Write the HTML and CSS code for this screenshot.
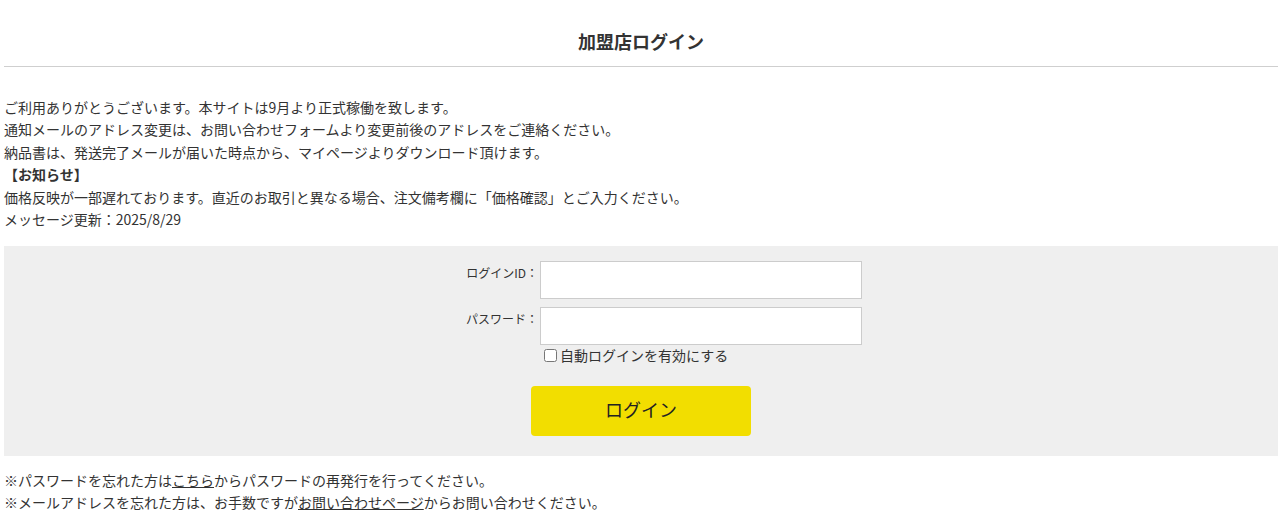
FILE: index.html
```html
<html>
  <head>
    <meta charset="utf-8">
    <title>加盟店ログイン</title>
    <link rel="stylesheet" href="styles.css">
  </head>
  <body>
    <div class="page">
      <h1 class="title">加盟店ログイン</h1>

      <div class="message">
        <p>ご利用ありがとうございます。本サイトは9月より正式稼働を致します。</p>
        <p>通知メールのアドレス変更は、お問い合わせフォームより変更前後のアドレスをご連絡ください。</p>
        <p>納品書は、発送完了メールが届いた時点から、マイページよりダウンロード頂けます。</p>
        <p class="notice">【お知らせ】</p>
        <p>価格反映が一部遅れております。直近のお取引と異なる場合、注文備考欄に「価格確認」とご入力ください。</p>
        <p>メッセージ更新：2025/8/29</p>
      </div>

      <form class="login-box" onsubmit="return false;">
        <div class="fields">
          <label class="label" for="login-id">ログインID：</label>
          <input class="input" type="text" id="login-id">
          <label class="label" for="password">パスワード：</label>
          <input class="input" type="password" id="password">
          <span></span>
          <label class="remember"><input type="checkbox">自動ログインを有効にする</label>
        </div>
        <div class="actions">
          <button class="login-button" type="submit">ログイン</button>
        </div>
      </form>

      <div class="help">
        <p>※パスワードを忘れた方は<a href="#">こちら</a>からパスワードの再発行を行ってください。</p>
        <p>※メールアドレスを忘れた方は、お手数ですが<a href="#">お問い合わせページ</a>からお問い合わせください。</p>
      </div>
    </div>
  </body>
</html>
```

FILE: styles.css
```css
/* General */
body {
  margin: 0;
  font-family: "Noto Sans CJK JP", "Noto Sans", sans-serif;
  font-size: 14px;
  color: #333;
  background-color: #fff;
}

p {
  margin: 0;
}

.page {
  padding: 0 5px 0 4px;
}

/* Header */
.title {
  margin: 0;
  padding: 29px 0 13px;
  font-size: 18px;
  line-height: 24px;
  text-align: center;
  border-bottom: 1px solid #cfcfcf;
}

/* Message */
.message {
  margin-top: 29px;
  line-height: 22.4px;
}

.notice {
  font-weight: bold;
}

/* Login form */
.login-box {
  margin: 16px 0 0;
  padding: 15px 0 20px;
  background-color: #efefef;
}

.fields {
  display: grid;
  grid-template-columns: 118px 322px;
  column-gap: 2px;
  row-gap: 8px;
  justify-content: center;
}

.label {
  font-size: 12px;
  line-height: 18px;
  padding-top: 3px;
  text-align: right;
}

.input {
  height: 38px;
  margin: 0;
  border: 1px solid #ccc;
  background-color: #fff;
  box-sizing: border-box;
}

.remember {
  display: flex;
  align-items: center;
  margin-top: -8px;
  font-size: 14px;
  line-height: 20px;
}

.remember input {
  margin: 0 3px 0 4px;
  width: 13px;
  height: 13px;
}

.actions {
  display: flex;
  justify-content: center;
  margin-top: 21px;
}

.login-button {
  width: 220px;
  height: 50px;
  padding: 0 0 4px;
  border: none;
  border-radius: 4px;
  background-color: #f2de00;
  color: #222;
  font-family: inherit;
  font-size: 18px;
  cursor: pointer;
}

/* Help links */
.help {
  margin-top: 13px;
  line-height: 22px;
}

.help a {
  color: #333;
  text-decoration: underline;
}
```
